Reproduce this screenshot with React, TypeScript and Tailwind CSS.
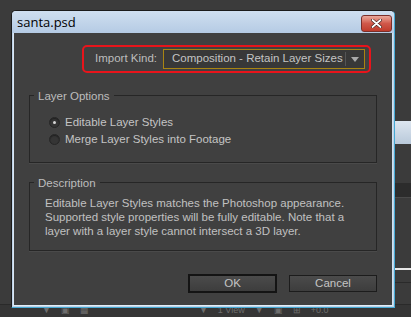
import { FC } from "react";

const ui = { fontFamily: '"Liberation Sans", Arial, sans-serif' };

const Radio: FC<{ checked?: boolean; label: string }> = ({ checked, label }) => (
	<label className="flex items-center gap-[5px] h-[17px]">
		<span className="w-[11px] h-[11px] rounded-full border border-[#262626] bg-[#353535] flex items-center justify-center shadow-[inset_0_1px_1px_rgba(0,0,0,0.4)]">
			{checked && <span className="w-[3px] h-[3px] rounded-full bg-[#d6d6d6]" />}
		</span>
		<span>{label}</span>
	</label>
);

const Group: FC<{ title: string; className?: string; children: React.ReactNode }> = ({ title, className, children }) => (
	<div className={`relative border border-[#262626] shadow-[0_1px_0_#4a4a4a] ${className ?? ""}`}>
		<span className="absolute left-[4px] top-[-7px] px-[4px] leading-[14px] bg-[#404040] text-[#bdbdbd]">{title}</span>
		{children}
	</div>
);

const App: FC = () => {
	return (
		<div className="relative w-[411px] h-[317px] overflow-hidden bg-[#3b3b3b] text-[11.5px] text-[#c4c4c4] whitespace-nowrap" style={ui}>
			{/* app behind the dialog */}
			<div className="absolute left-[395px] top-[121px] w-[20px] h-[23px] bg-gradient-to-b from-[#dde6f0] to-[#b9c9da]" />
			<div className="absolute left-[395px] top-[183px] w-[20px] h-[15px] bg-[#2c2c2c] border-b border-[#4a4a4a]" />
			<div className="absolute left-[395px] top-[268px] w-[20px] h-[2px] bg-[#e6e6e6]" />
			<div className="absolute left-[395px] top-[282px] w-[20px] h-[1px] bg-[#2a2a2a]" />
			<div className="absolute left-0 top-[304px] w-[411px] h-[1px] bg-[#2a2a2a]" />
			<div className="absolute left-0 top-[305px] w-[411px] h-[12px] bg-[#353535] flex items-center gap-[10px] pl-[42px] text-[9px] text-[#6d6d6d]">
				<span>▼</span>
				<span>▣</span>
				<span>▦</span>
				<span className="ml-[100px]">▼</span>
				<span>1 View</span>
				<span>▼</span>
				<span>▣</span>
				<span>⊞</span>
				<span>+0.0</span>
			</div>

			{/* dialog window */}
			<div className="absolute left-[11px] top-[10px] w-[384px] h-[298px] flex flex-col rounded-t-[5px] border border-[#1b1b1b] border-r-[#45a9d4] border-b-[#45a9d4] bg-[#bfd3e8]">
				<div className="h-[22px] shrink-0 flex items-center justify-between pl-[5px] pr-[2px] bg-gradient-to-b from-[#cfdff0] to-[#b5cbe4] rounded-t-[4px]">
					<span className="text-[13px] text-black leading-none" style={{ fontFamily: '"Open Sans", "Noto Sans", sans-serif' }}>
						santa.psd
					</span>
					<button className="mt-[2px] w-[31px] h-[17px] rounded-[3px] border border-[#7a2f2a] bg-gradient-to-b from-[#e9a89c] via-[#d0584a] to-[#c03c2c] flex items-center justify-center">
						<svg width="11" height="9" viewBox="0 0 11 9">
							<path d="M1.5 1 L9.5 8 M9.5 1 L1.5 8" stroke="#3a1a16" strokeWidth="3" strokeLinecap="round" />
							<path d="M1.5 1 L9.5 8 M9.5 1 L1.5 8" stroke="#ffffff" strokeWidth="1.8" strokeLinecap="round" />
						</svg>
					</button>
				</div>
				<div className="flex-1 ml-[1px] mr-[1px] mb-[1px] bg-[#404040] border-l border-[#d9e6f3] border-r border-r-[#cfe3f2] border-b border-b-[#e0eef8] flex flex-col px-[15px]">
					<div className="flex justify-end mt-[12px] mr-[6px]">
						<div className="w-[289px] h-[28px] rounded-[5px] border-2 border-[#e8141b] flex items-center justify-end gap-[6px] pr-[4px]">
							<span className="text-[#bdbdbd]">Import Kind:</span>
							<div className="w-[202px] h-[20px] border border-[#a88412] bg-[#383838] flex items-center">
								<span className="flex-1 pl-[8px] text-[#c4c4c4] leading-none">Composition - Retain Layer Sizes</span>
								<span className="w-[1px] h-[14px] bg-[#222] border-r border-[#555]" />
								<span className="w-[18px] flex justify-center">
									<svg width="8" height="5" viewBox="0 0 8 5">
										<path d="M0 0 H8 L4 5 Z" fill="#aaa" />
									</svg>
								</span>
							</div>
						</div>
					</div>

					<Group title="Layer Options" className="mt-[22px] h-[68px] pl-[19px] pt-[18px]">
						<Radio checked label="Editable Layer Styles" />
						<Radio label="Merge Layer Styles into Footage" />
					</Group>

					<Group title="Description" className="mt-[19px] h-[69px] pl-[15px] pt-[13px]">
						<p className="leading-[14px] text-[#c0c0c0]">
							Editable Layer Styles matches the Photoshop appearance.
							<br />
							Supported style properties will be fully editable. Note that a
							<br />
							layer with a layer style cannot intersect a 3D layer.
						</p>
					</Group>

					<div className="flex justify-end items-start gap-[12px] mt-[23px]">
						<button className="w-[89px] h-[19px] border-2 border-[#141414] bg-gradient-to-b from-[#4b4b4b] to-[#3d3d3d] text-[#c4c4c4] leading-none">
							OK
						</button>
						<button className="mt-[1px] w-[88px] h-[17px] border border-[#1c1c1c] bg-gradient-to-b from-[#4b4b4b] to-[#3d3d3d] text-[#c4c4c4] leading-none">
							Cancel
						</button>
					</div>
				</div>
			</div>
		</div>
	);
};

export default App;
